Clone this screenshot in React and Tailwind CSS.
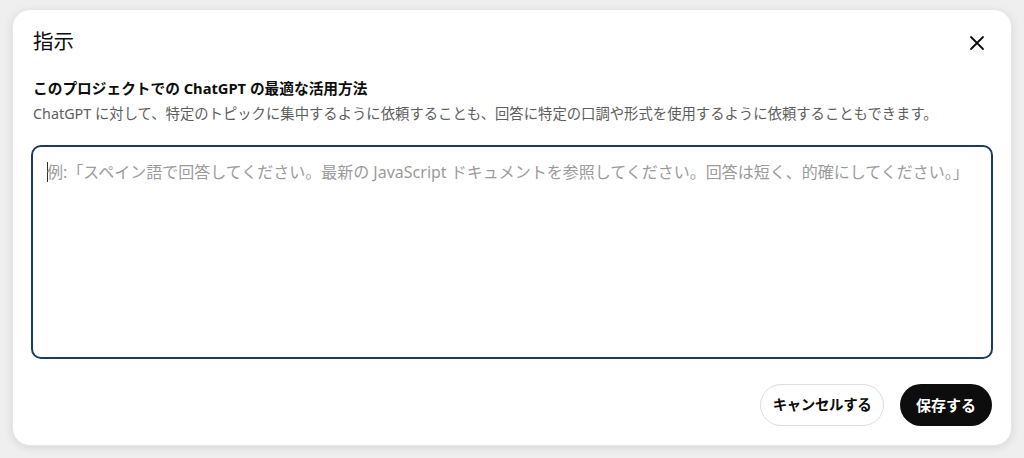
import React from "react";

export default function App() {
  const font = { fontFamily: '"Noto Sans", "Noto Sans CJK JP", sans-serif' };
  return (
    <div
      className="w-[1024px] h-[458px] bg-[#efefef] flex items-start justify-center pt-[9px] overflow-hidden"
      style={font}
    >
      <div className="w-[1000px] h-[437px] bg-white rounded-[18px] shadow-[0_2px_10px_rgba(0,0,0,0.10)] border border-[#e6e6e6] flex flex-col px-[18px]">
        <div className="flex items-center justify-between pt-[15px] h-[46px]">
          <h2 className="ml-[2px] text-[20.5px] leading-[28px] text-[#0d0d0d] font-normal">指示</h2>
          <button className="w-8 h-8 flex items-center justify-center mr-0 mt-[4px]">
            <svg width="16" height="16" viewBox="0 0 16 16" fill="none">
              <path d="M2 2 L14 14 M14 2 L2 14" stroke="#0d0d0d" strokeWidth="1.8" strokeLinecap="round" />
            </svg>
          </button>
        </div>
        <div className="mt-[22px] ml-[2px]">
          <div className="text-[14.7px] leading-[20px] font-bold text-[#0d0d0d]">
            このプロジェクトでの ChatGPT の最適な活用方法
          </div>
          <div className="text-[14.35px] leading-[20px] text-[#5d5d5d] mt-[6px] whitespace-nowrap">
            ChatGPT に対して、特定のトピックに集中するように依頼することも、回答に特定の口調や形式を使用するように依頼することもできます。
          </div>
        </div>
        <div className="mt-[21px] h-[214px] rounded-[10px] border-2 border-[#1d3b60] px-[14px] pt-[13px]">
          <div className="flex items-center text-[16px] leading-[24px] text-[#9b9b9b] whitespace-nowrap">
            <span className="w-px h-[20px] bg-[#333] mr-[-1px]"></span>
            <span>例:「スペイン語で回答してください。最新の JavaScript ドキュメントを参照してください。回答は短く、的確にしてください。」</span>
          </div>
        </div>
        <div className="flex justify-end gap-4 mt-[25px] mr-[1px]">
          <button className="h-[42px] w-[124px] rounded-full border border-[#dedede] bg-white text-[14.5px] tracking-[-0.4px] font-semibold text-[#0d0d0d] flex items-center justify-center">
            キャンセルする
          </button>
          <button className="h-[42px] w-[92px] rounded-full bg-[#0d0d0d] text-white text-[15px] font-semibold flex items-center justify-center">
            保存する
          </button>
        </div>
      </div>
    </div>
  );
}
